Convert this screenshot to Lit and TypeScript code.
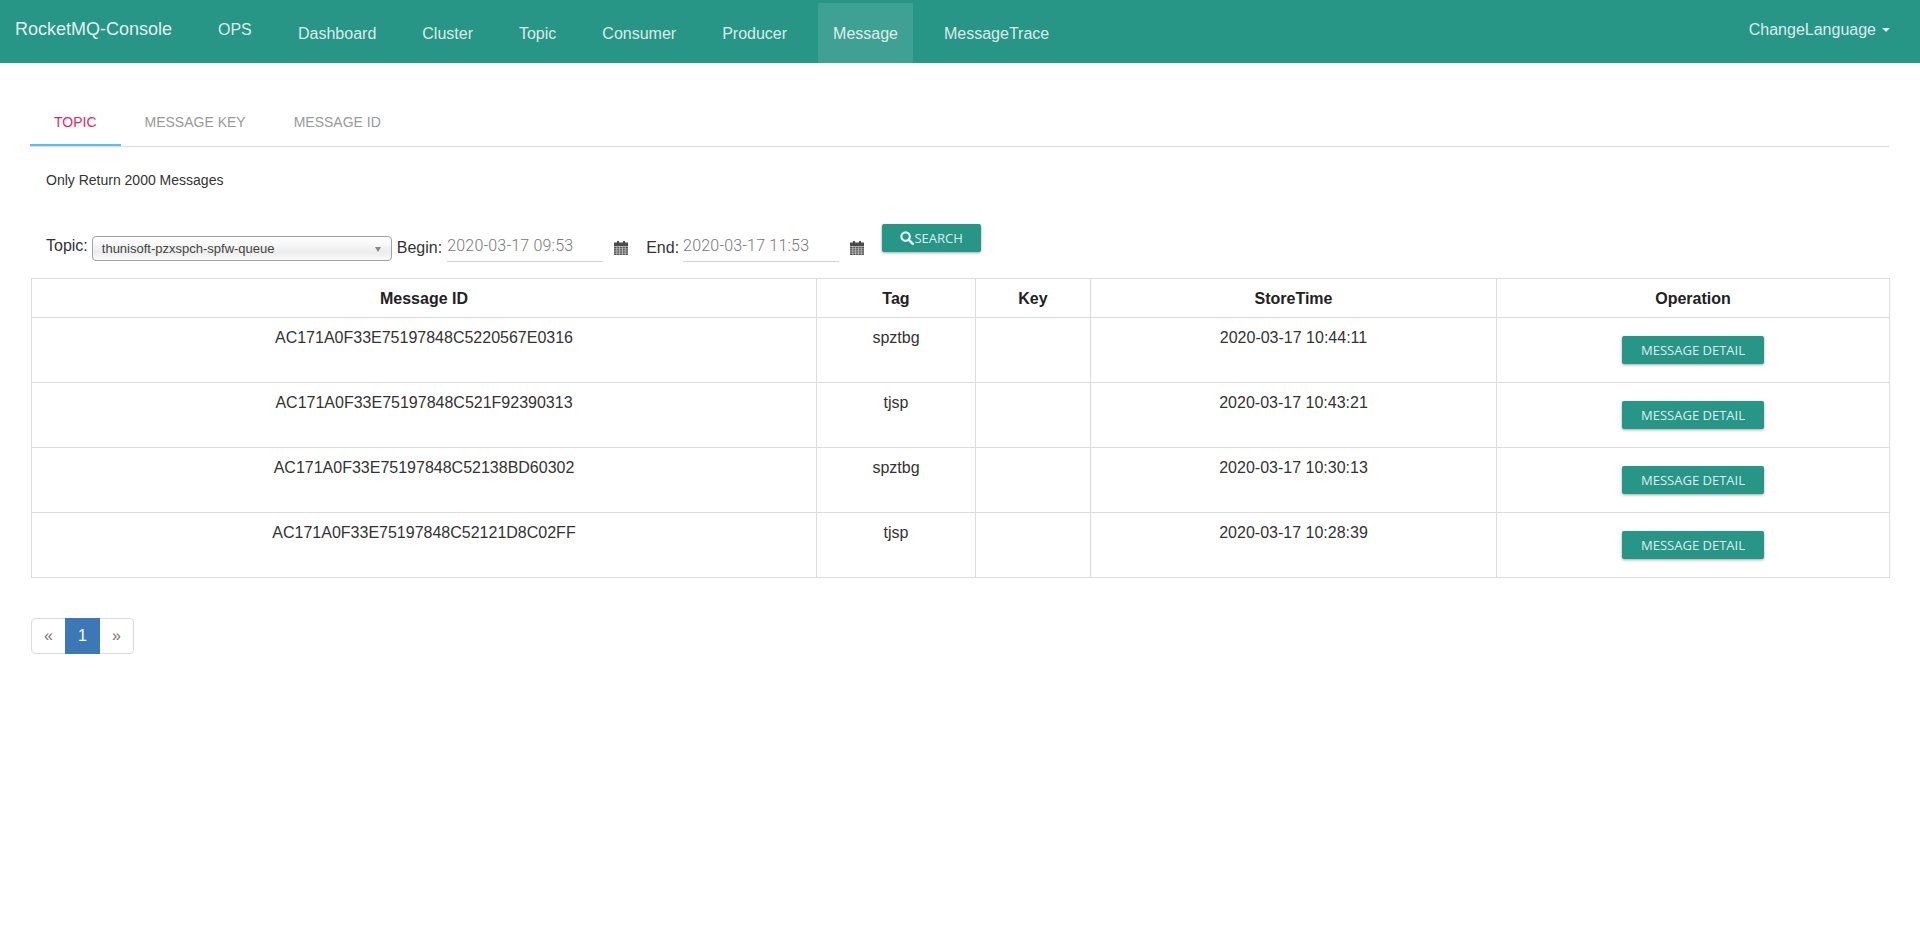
import { LitElement, html, css, svg } from "lit";
import { customElement } from "lit/decorators.js";

const NAV = ["Dashboard", "Cluster", "Topic", "Consumer", "Producer", "Message", "MessageTrace"];
const ROWS = [
  ["AC171A0F33E75197848C5220567E0316", "spztbg", "2020-03-17 10:44:11"],
  ["AC171A0F33E75197848C521F92390313", "tjsp", "2020-03-17 10:43:21"],
  ["AC171A0F33E75197848C52138BD60302", "spztbg", "2020-03-17 10:30:13"],
  ["AC171A0F33E75197848C52121D8C02FF", "tjsp", "2020-03-17 10:28:39"],
];

const calendar = svg`<path fill="#4a4a4a" d="M3 0h2v1.5h4V0h2v1.5h3V5H0V1.5h3z"/><path fill="#555" d="M0 5.5h14V14H0z"/><path stroke="#fff" stroke-opacity=".75" stroke-width=".6" d="M0 7.8h14M0 10h14M0 12.2h14M2.8 5.5V14M5.6 5.5V14M8.4 5.5V14M11.2 5.5V14"/>`;

@customElement("app-root")
export class AppRoot extends LitElement {
  static styles = css`
    :host { display: block; min-height: 937px; background: #fff; color: #333; font: 16px/1.42857 "Liberation Sans", Arial, sans-serif; }
    .nav { display: flex; height: 63px; background: #279687; color: rgba(255,255,255,.84); box-shadow: 0 1px 2px rgba(0,0,0,.05); }
    .brand { font-size: 18px; color: rgba(255,255,255,.88); padding: 17px 0 0 15px; width: 173px; line-height: 25px; box-sizing: border-box; white-space: nowrap; }
    .ops { padding: 18px 0 0 45px; line-height: 23px; width: 65px; }
    .items { display: flex; gap: 16px; margin: 3px 0 0 0; }
    .item { padding: 19px 15px 0; height: 60px; box-sizing: border-box; line-height: 23px; }
    .item.active { background: #3ea193; }
    .lang { margin-left: auto; padding: 18px 30px 0 0; line-height: 23px; display: flex; align-items: center; align-self: flex-start; }
    .caret { width: 0; height: 0; margin-left: 6px; border-top: 4px solid rgba(255,255,255,.84); border-left: 4px solid transparent; border-right: 4px solid transparent; }
    .main { padding: 35px 31px 0 30px; }
    .tabs { display: flex; height: 48px; border-bottom: 1px solid #ddd; box-sizing: content-box; font-size: 14px; text-transform: uppercase; color: #999; }
    .tab { padding: 0 24px; line-height: 48px; height: 48px; box-sizing: border-box; }
    .tab.on { color: #e91e63; border-bottom: 2px solid #4fc3f7; }
    .note { font-size: 14px; margin: 23px 0 0 16px; line-height: 20px; }
    .form { display: flex; align-items: flex-start; margin: 34px 0 0 16px; height: 54px; color: #333; }
    .lbl { line-height: 23px; margin-top: 10px; white-space: nowrap; }
    .lbl.b, .lbl.e { margin-top: 12px; }
    .select { width: 300px; height: 25px; margin: 12px 0 0 4px; box-sizing: border-box; border: 1px solid #a2a2a2; border-radius: 4px; background: linear-gradient(#fff, #f8f8f8 30%, #ececec 65%, #fbfbfb); display: flex; align-items: center; justify-content: space-between; padding: 1px 9px 0; font-size: 13px; color: #444; }
    .arrow { width: 0; height: 0; border-top: 5px solid #888; border-left: 3.5px solid transparent; border-right: 3.5px solid transparent; margin-right: 1px; }
    .date { width: 156px; height: 38px; box-sizing: border-box; border-bottom: 1px solid #d2d2d2; font: 300 16px/44px Roboto, sans-serif; letter-spacing: .2px; color: #777; white-space: nowrap; }
    .b { margin-left: 5px; }
    .b2 { margin-left: 5px; }
    .cal { width: 14px; height: 14px; margin: 17px 0 0 11px; flex: none; }
    .e { margin-left: 18px; }
    .e2 { margin-left: 4px; }
    .btn { background: #279687; color: rgba(255,255,255,.86); border: 0; border-radius: 2px; box-shadow: 0 1px 3px rgba(0,0,0,.35); font: 500 13px/28px "Open Sans", sans-serif; text-transform: uppercase; height: 28px; padding: 0; display: inline-flex; align-items: center; justify-content: center; }
    .search { width: 99px; margin-left: 18px; }
    .search svg { width: 14px; height: 14px; margin-right: 0; }
    table { border-collapse: collapse; table-layout: fixed; width: 1858px; margin-left: 1px; }
    th, td { border: 1px solid #ddd; padding: 8px; text-align: center; vertical-align: top; line-height: 23px; }
    th { color: #222; font-weight: 700; padding-bottom: 7px; }
    td .btn { width: 142px; margin: 10px auto; display: flex; }
    .pager { display: flex; width: 103px; height: 36px; margin-top: 40px; margin-left: 1px; box-sizing: border-box; border: 1px solid #ddd; border-radius: 4px; color: #777; font-size: 16px; }
    .pager span { flex: 1; display: flex; align-items: center; justify-content: center; }
    .pager .cur { color: #fff; margin: -1px 0; flex: 0 0 35px; background: #3b78b5; }
  `;

  render() {
    return html`
      <div class="nav">
        <div class="brand">RocketMQ-Console</div>
        <div class="ops">OPS</div>
        <div class="items">
          ${NAV.map((n) => html`<div class="item ${n === "Message" ? "active" : ""}">${n}</div>`)}
        </div>
        <div class="lang">ChangeLanguage<span class="caret"></span></div>
      </div>
      <div class="main">
        <div class="tabs">
          <div class="tab on">Topic</div>
          <div class="tab">Message Key</div>
          <div class="tab">Message ID</div>
        </div>
        <div class="note">Only Return 2000 Messages</div>
        <div class="form">
          <span class="lbl">Topic:</span>
          <div class="select"><span>thunisoft-pzxspch-spfw-queue</span><i class="arrow"></i></div>
          <span class="lbl b">Begin:</span>
          <div class="date b2">2020-03-17 09:53</div>
          <svg class="cal" viewBox="0 0 14 14">${calendar}</svg>
          <span class="lbl e">End:</span>
          <div class="date e2">2020-03-17 11:53</div>
          <svg class="cal" viewBox="0 0 14 14">${calendar}</svg>
          <button class="btn search">
            <svg viewBox="0 0 14 14"><circle cx="5.6" cy="5.6" r="4.2" fill="none" stroke="currentColor" stroke-width="2.2"/><path d="M8.8 8.8l4 4" stroke="currentColor" stroke-width="2.6" stroke-linecap="round"/></svg>Search
          </button>
        </div>
        <table>
          <colgroup><col style="width:785px"/><col style="width:159px"/><col style="width:115px"/><col style="width:406px"/><col style="width:393px"/></colgroup>
          <thead><tr><th>Message ID</th><th>Tag</th><th>Key</th><th>StoreTime</th><th>Operation</th></tr></thead>
          <tbody>
            ${ROWS.map((r) => html`<tr><td>${r[0]}</td><td>${r[1]}</td><td></td><td>${r[2]}</td><td><button class="btn">Message Detail</button></td></tr>`)}
          </tbody>
        </table>
        <div class="pager"><span>«</span><span class="cur">1</span><span>»</span></div>
      </div>
    `;
  }
}
